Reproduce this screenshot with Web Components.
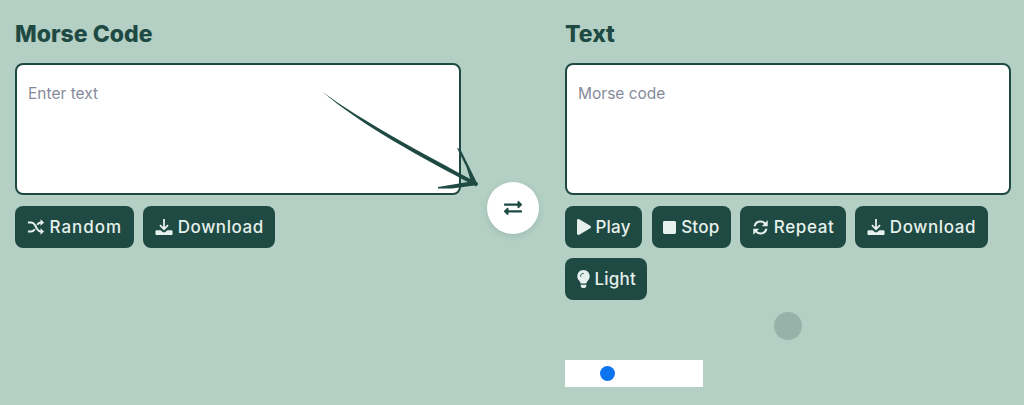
<!DOCTYPE html>
<html lang="en">
<head>
<meta charset="utf-8">
<title>Morse Code Translator</title>
<style>
	html, body {
		margin: 0;
		height: 405px;
		overflow: hidden;
		background: #b4d0c5;
		font-family: "Inter", "Liberation Sans", sans-serif;
	}
</style>
</head>
<body>
<morse-app></morse-app>

<script>
const icons = {
	random: `<svg viewBox="0 0 20 20" width="18" height="18" fill="none" stroke="currentColor" stroke-width="2.3"><path d="M1 5h3.500c2 0 3.200 1 4.500 3l2 4c1.300 2 2.500 3 4.500 3h1"/><path d="M1 15h3.500c2 0 3.200-1 4.200-2.500M11.300 7.500C12.300 6 13.500 5 15.500 5h1"/><path d="M15 1.500l4 3.500-4 3.500zM15 11.500l4 3.500-4 3.500z" fill="currentColor" stroke="none"/></svg>`,
	download: `<svg viewBox="0 0 20 20" width="18" height="18" fill="none" stroke="currentColor" stroke-width="2"><path d="M10 1v11M5.500 8l4.500 4.500L14.500 8"/><path d="M1.500 13.500h4.700l2 1.700c1 .8 2.600.8 3.600 0l2-1.700h4.700c.6 0 1 .4 1 1v3.500c0 .6-.4 1-1 1h-17c-.6 0-1-.4-1-1v-3.500c0-.6.400-1 1-1z" fill="currentColor" stroke="none"/></svg>`,
	play: `<svg viewBox="0 0 448 512" width="14" height="16" fill="currentColor"><path d="M424.400 214.700L72.400 6.600C43.800-10.300 0 6.100 0 47.900V464c0 37.500 40.700 60.100 72.400 41.300l352-208c31.400-18.500 31.500-64.100 0-82.600z"/></svg>`,
	stop: `<svg viewBox="0 0 448 448" width="13" height="13" fill="currentColor"><path d="M400 0H48C21.500 0 0 21.500 0 48v352c0 26.500 21.500 48 48 48h352c26.500 0 48-21.500 48-48V48c0-26.500-21.500-48-48-48z"/></svg>`,
	repeat: `<svg viewBox="0 0 20 20" width="17" height="17" fill="none" stroke="currentColor" stroke-width="2.400"><path d="M3 8.500C3.800 5.200 6.600 3 10 3c2.300 0 4.300 1 5.600 2.700"/><path d="M17 11.500c-.8 3.300-3.600 5.500-7 5.500-2.300 0-4.300-1-5.600-2.700"/><path d="M18.500 1.500v7h-7zM1.500 18.500v-7h7z" fill="currentColor" stroke="none"/></svg>`,
	light: `<svg viewBox="0 0 352 512" width="13" height="18" fill="currentColor"><path d="M96.060 454.350c.01 6.290 1.870 12.450 5.360 17.690l17.090 25.690a31.990 31.990 0 0 0 26.640 14.280h61.710a31.990 31.990 0 0 0 26.640-14.280l17.090-25.690a31.989 31.989 0 0 0 5.360-17.690l.04-38.350H96.010l.05 38.350zM0 176c0 44.370 16.450 84.850 43.560 115.780 16.520 18.850 42.360 58.230 52.210 91.450.04.26.07.52.11.78h160.240c.04-.26.07-.51.11-.78 9.850-33.220 35.690-72.600 52.210-91.450C335.550 260.850 352 220.370 352 176 352 78.610 272.910-.3 175.450 0 73.440.31 0 82.970 0 176z"/><path d="M90 176c0-45 36-80 80-80" fill="none" stroke="#1f4a43" stroke-width="28" stroke-linecap="round"/></svg>`,
	swap: `<svg viewBox="0 0 512 512" width="18" height="18" fill="currentColor"><path d="M0 168v-16c0-13.255 10.745-24 24-24h360V80c0-21.367 25.899-32.042 40.971-16.971l80 80c9.372 9.373 9.372 24.569 0 33.941l-80 80C409.956 271.982 384 261.456 384 240v-48H24c-13.255 0-24-10.745-24-24zm488 152H128v-48c0-21.314-25.862-32.080-40.971-16.971l-80 80c-9.372 9.373-9.372 24.569 0 33.941l80 80C102.057 463.997 128 453.437 128 432v-48h360c13.255 0 24-10.745 24-24v-16c0-13.255-10.745-24-24-24z"/></svg>`
};

class MorseButton extends HTMLElement {
	constructor() {
		super();
		this.attachShadow({ mode: 'open' });
	}

	connectedCallback() {
		const icon = this.getAttribute('icon');
		this.shadowRoot.innerHTML = `
		<style>
			:host {
				display: inline-flex;
				align-items: center;
				justify-content: center;
				gap: 5px;
				height: 42px;
				box-sizing: border-box;
				padding: 0 11.500px;
				background: #1f4a43;
				border-radius: 8px;
				color: #e6f0ec;
				font-size: 17px;
				font-weight: 500;
				letter-spacing: 0.6px;
				cursor: pointer;
			}
			:host([icon="play"]), :host([icon="stop"]), :host([icon="light"]) {
				letter-spacing: 0.2px;
			}
			:host([icon="random"]) {
				letter-spacing: 1px;
			}
			svg { display: block; flex: none; }
		</style>
		${icons[icon]}<slot></slot>
		`;
	}
}

customElements.define('morse-button', MorseButton);

class MorseField extends HTMLElement {
	constructor() {
		super();
		this.attachShadow({ mode: 'open' });
		this.shadowRoot.innerHTML = `
		<style>
			:host {
				display: block;
				height: 132px;
				box-sizing: border-box;
				padding: 20px 11px;
				background: #fff;
				border: 2px solid #1f4a43;
				border-radius: 8px;
				color: #858a9a;
				font-size: 15.500px;
				line-height: 18px;
			}
		</style>
		<slot></slot>
		`;
	}
}

customElements.define('morse-field', MorseField);

class MorsePanel extends HTMLElement {
	constructor() {
		super();
		this.attachShadow({ mode: 'open' });
		this.shadowRoot.innerHTML = `
		<style>
			:host {
				display: block;
				width: 446px;
				flex: none;
			}
			h2 {
				margin: 0 0 14px;
				height: 30px;
				line-height: 30px;
				font-size: 23px;
				font-weight: 800;
				color: #1f4a43;
			}
			.actions {
				display: flex;
				flex-wrap: wrap;
				gap: 10px 9.500px;
				margin-top: 11px;
			}
		</style>
		<h2>${this.getAttribute('heading')}</h2>
		<slot name="field"></slot>
		<div class="actions"><slot name="action"></slot></div>
		<slot name="extra"></slot>
		`;
	}
}

customElements.define('morse-panel', MorsePanel);

class SwapButton extends HTMLElement {
	constructor() {
		super();
		this.attachShadow({ mode: 'open' });
		this.shadowRoot.innerHTML = `
		<style>
			:host {
				display: flex;
				align-items: center;
				justify-content: center;
				width: 52px;
				height: 52px;
				flex: none;
				margin: 163px 26px 0;
				background: #fff;
				border-radius: 50%;
				color: #1f4a43;
				box-shadow: 0 2px 6px rgba(31, 74, 67, 0.15);
			}
		</style>
		${icons.swap}
		`;
	}
}

customElements.define('swap-button', SwapButton);

class LightPreview extends HTMLElement {
	constructor() {
		super();
		this.attachShadow({ mode: 'open' });
		this.shadowRoot.innerHTML = `
		<style>
			:host {
				display: flex;
				align-items: center;
				width: 138px;
				height: 27px;
				margin-top: 60px;
				padding-left: 35px;
				box-sizing: border-box;
				background: #fff;
			}
			i {
				width: 15px;
				height: 15px;
				border-radius: 50%;
				background: #0d74f0;
			}
		</style>
		<i></i>
		`;
	}
}

customElements.define('light-preview', LightPreview);

class MorseApp extends HTMLElement {
	constructor() {
		super();
		this.attachShadow({ mode: 'open' });
		this.shadowRoot.innerHTML = `
		<style>
			:host {
				display: flex;
				position: relative;
				align-items: flex-start;
				height: 405px;
				box-sizing: border-box;
				padding: 19px 0 0 15px;
				overflow: hidden;
			}
			.stroke {
				position: absolute;
				left: 0;
				top: 0;
				pointer-events: none;
			}
			.pointer {
				position: absolute;
				left: 774px;
				top: 312px;
				width: 28px;
				height: 28px;
				border-radius: 50%;
				background: #97b3a9;
			}
		</style>
		<morse-panel heading="Morse Code">
			<morse-field slot="field">Enter text</morse-field>
			<morse-button slot="action" icon="random">Random</morse-button>
			<morse-button slot="action" icon="download">Download</morse-button>
		</morse-panel>
		<swap-button></swap-button>
		<morse-panel heading="Text">
			<morse-field slot="field">Morse code</morse-field>
			<morse-button slot="action" icon="play">Play</morse-button>
			<morse-button slot="action" icon="stop">Stop</morse-button>
			<morse-button slot="action" icon="repeat">Repeat</morse-button>
			<morse-button slot="action" icon="download">Download</morse-button>
			<morse-button slot="action" icon="light">Light</morse-button>
			<light-preview slot="extra"></light-preview>
		</morse-panel>
		<svg class="stroke" width="1024" height="405" fill="#1f4a43">
			<path d="M322 91.500C362 121 420 152 478 183L476.500 186.500C420 157 362 125.500 322 91.500z"/>
			<path d="M457 148L460.500 149.500L478 185L452 188.500L438 188.500L438 187L471 181.500L466.500 167z"/>
		</svg>
		<div class="pointer"></div>
		`;
	}
}

customElements.define('morse-app', MorseApp);
</script>
</body>
</html>
